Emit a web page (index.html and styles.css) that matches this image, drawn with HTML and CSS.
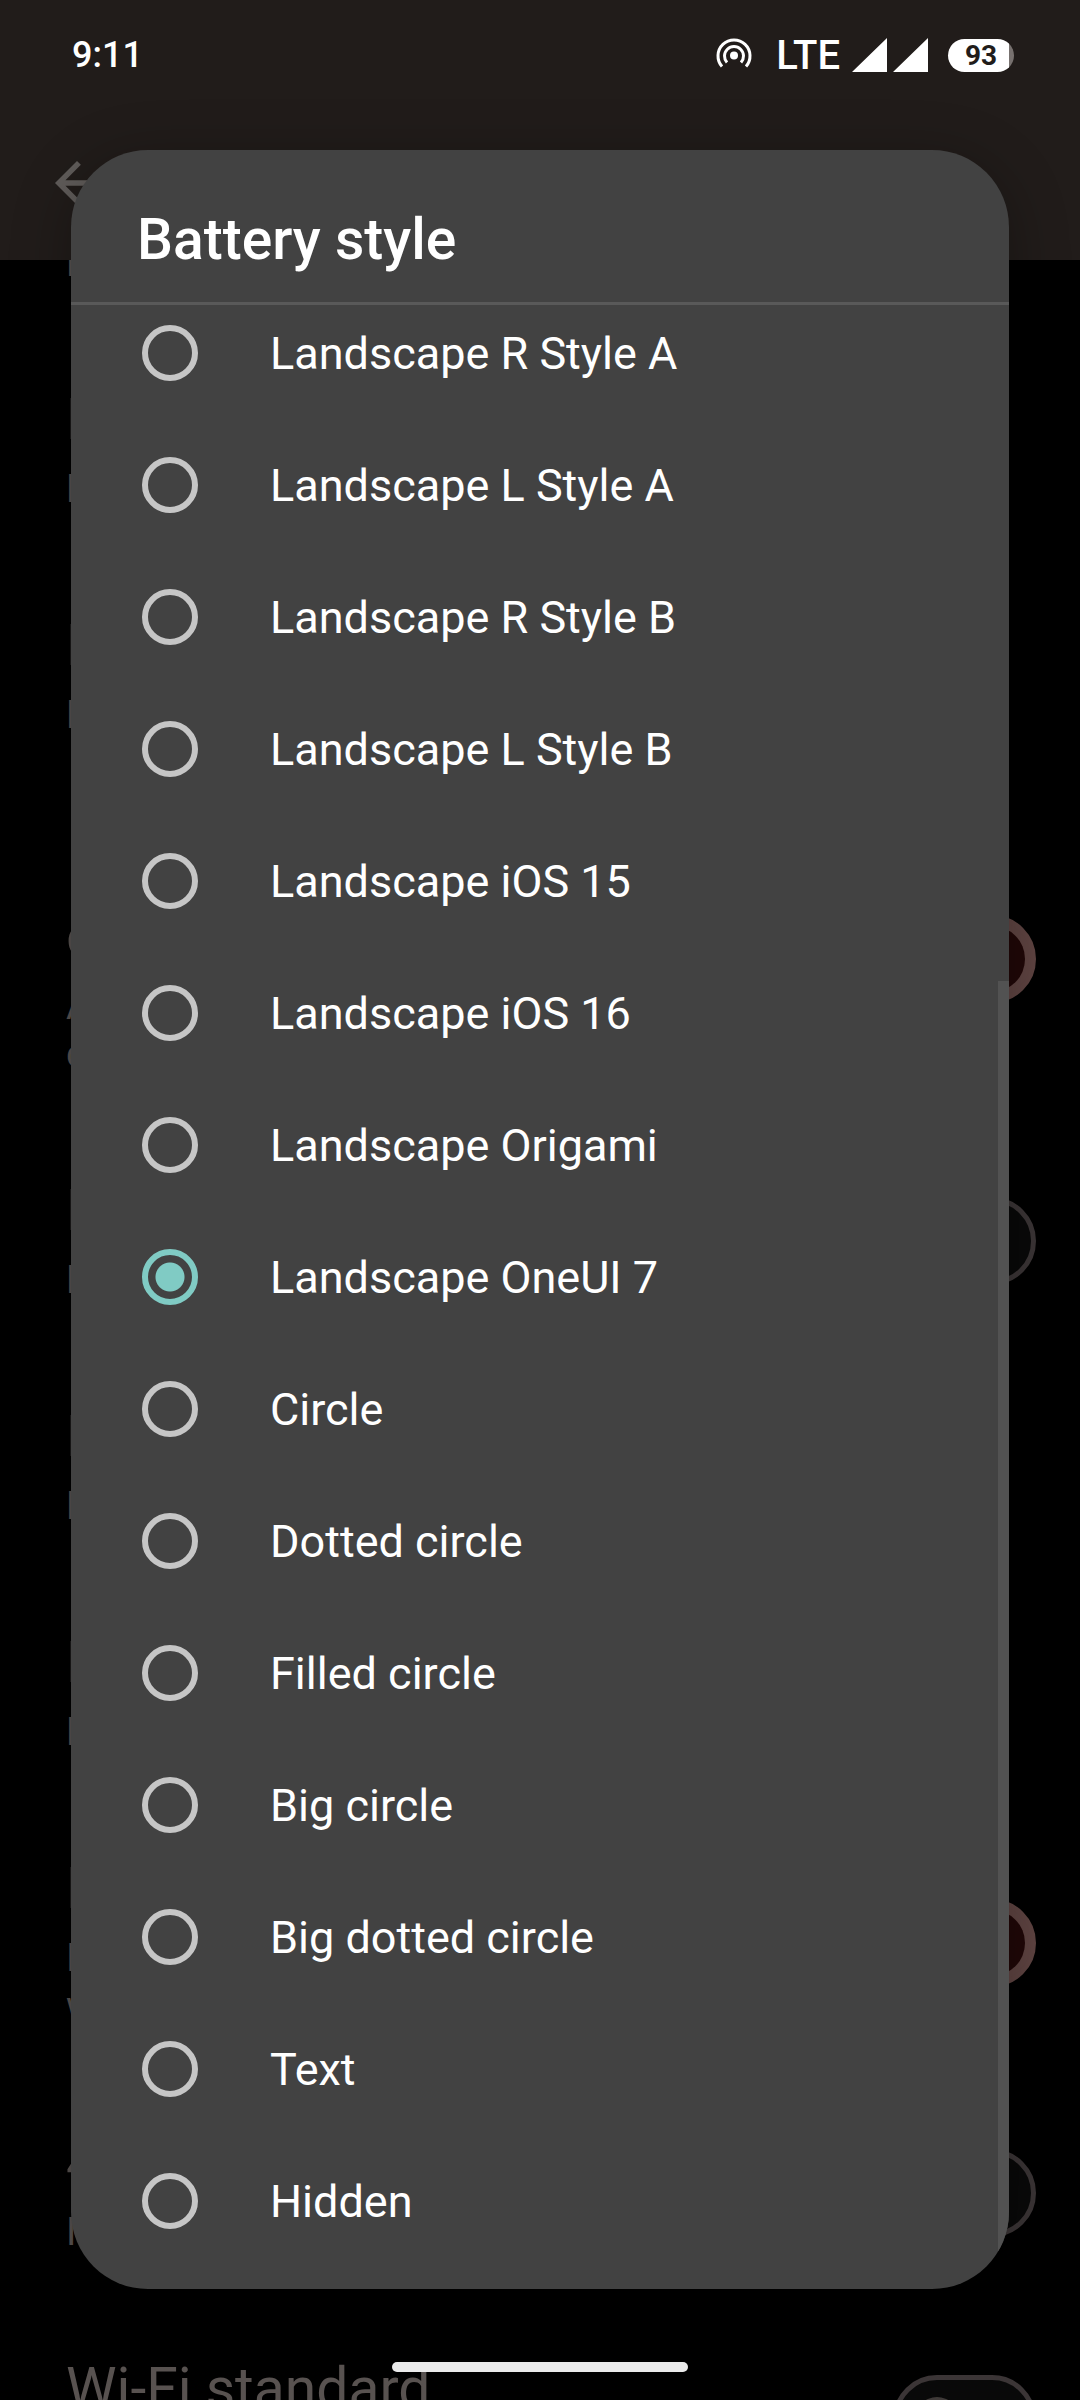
FILE: index.html
```html
<!DOCTYPE html>
<html lang="en">
<head>
<meta charset="utf-8">
<meta name="viewport" content="width=device-width">
<title>Battery style</title>
<link rel="stylesheet" href="styles.css">
</head>
<body>
<div class="screen">
  <div class="settings" aria-hidden="true">
    <div class="app-bar">
      <svg class="back" viewBox="0 0 24 24"><path d="M20 11H7.8l5.6-5.6L12 4l-8 8 8 8 1.4-1.4L7.8 13H20z"/></svg>
    </div>
    <div class="prefs">
      <div class="pref"><div><p class="pref-title">L</p><p class="pref-note">L</p></div></div>
      <div class="pref"><div><p class="pref-title">L</p><p class="pref-note">L</p></div></div>
      <div class="pref"><div><p class="pref-title">L</p><p class="pref-note">L</p></div></div>
      <div class="pref"><div><p class="pref-title">I<br>c</p><p class="pref-note">A<br>c</p></div><span class="switch on"></span></div>
      <div class="pref"><div><p class="pref-title">L</p><p class="pref-note">L</p></div><span class="switch"></span></div>
      <div class="pref"><div><p class="pref-title">L</p><p class="pref-note">L</p></div></div>
      <div class="pref"><div><p class="pref-title">L</p><p class="pref-note">L</p></div></div>
      <div class="pref"><div><p class="pref-title">L</p><p class="pref-note">I<br>w</p></div><span class="switch on"></span></div>
      <div class="pref"><div><p class="pref-title">4</p><p class="pref-note">I</p></div><span class="switch"></span></div>
      <div class="pref"><div><p class="pref-title">Wi-Fi standard</p><p class="pref-note">&nbsp;</p></div><span class="switch"></span></div>
    </div>
  </div>

  <header class="status">
    <time class="clock">9:11</time>
    <div class="indicators">
      <svg class="hotspot" viewBox="0 0 36 36" fill="none" stroke="#fff" stroke-width="3">
        <path d="M6 29.500A16 16 0 1 1 30 29.500"/>
        <path d="M11 25.500A9.500 9.500 0 1 1 25 25.500"/>
        <circle cx="18" cy="18.500" r="4" fill="#fff" stroke="none"/>
      </svg>
      <span class="network">LTE</span>
      <svg class="signal" viewBox="0 0 76 34" fill="#fff"><path d="M0 34L35 0V34zM41 34L76 0V34z"/></svg>
      <span class="battery">93</span>
    </div>
  </header>

  <main class="overlay">
    <section class="dialog" role="dialog" aria-labelledby="dialog-title">
      <h1 class="dialog-title" id="dialog-title">Battery style</h1>
      <div class="scroller">
        <div class="options" role="radiogroup" aria-labelledby="dialog-title">
          <label class="option"><input type="radio" name="style">Landscape R Style A</label>
          <label class="option"><input type="radio" name="style">Landscape L Style A</label>
          <label class="option"><input type="radio" name="style">Landscape R Style B</label>
          <label class="option"><input type="radio" name="style">Landscape L Style B</label>
          <label class="option"><input type="radio" name="style">Landscape iOS 15</label>
          <label class="option"><input type="radio" name="style">Landscape iOS 16</label>
          <label class="option"><input type="radio" name="style">Landscape Origami</label>
          <label class="option"><input type="radio" name="style" checked>Landscape OneUI 7</label>
          <label class="option"><input type="radio" name="style">Circle</label>
          <label class="option"><input type="radio" name="style">Dotted circle</label>
          <label class="option"><input type="radio" name="style">Filled circle</label>
          <label class="option"><input type="radio" name="style">Big circle</label>
          <label class="option"><input type="radio" name="style">Big dotted circle</label>
          <label class="option"><input type="radio" name="style">Text</label>
          <label class="option"><input type="radio" name="style">Hidden</label>
        </div>
        <span class="scroll-thumb"></span>
      </div>
    </section>
  </main>
  <span class="home-pill"></span>
</div>
</body>
</html>
```
FILE: styles.css
```css
* { box-sizing: border-box; }

body {
  margin: 0;
  background: #000;
  color: #fff;
  font-family: Roboto, "Noto Sans", sans-serif;
}

h1, p { margin: 0; }

.screen {
  position: relative;
  min-height: 100vh;
  overflow: hidden;
}

/* Settings page, dimmed behind the dialog */
.settings {
  position: absolute;
  inset: 0;
  overflow: hidden;
  isolation: isolate;
}

.app-bar {
  position: relative;
  z-index: 1;
  height: 260px;
  padding: 150px 44px 0;
  background: #211c1a;
}

.back {
  display: block;
  width: 66px;
  height: 66px;
  fill: #605c5a;
}

.prefs { margin-top: -149px; }

.pref {
  display: flex;
  align-items: center;
  justify-content: space-between;
  padding: 50px 44px 50px 66px;
  color: #585250;
}

.pref-title {
  font-size: 57px;
  line-height: 65px;
}

.pref-note {
  margin-top: 13px;
  font-size: 38px;
  line-height: 48px;
}

.switch {
  display: flex;
  align-items: center;
  width: 143px;
  height: 88px;
  margin: -12px 0;
  padding: 0 17px;
  border: 5px solid #3b3536;
  border-radius: 44px;
  background: #090909;
}

.switch::before {
  content: "";
  width: 44px;
  height: 44px;
  border-radius: 50%;
  background: #3f3a38;
}

.switch.on {
  justify-content: flex-end;
  padding: 0 6px;
  border-color: #5f4442;
  background: #5f4442;
}

.switch.on::before {
  width: 66px;
  height: 66px;
  background: #200707;
}

/* Status bar */
.status {
  position: absolute;
  inset: 0 0 auto;
  z-index: 1;
  display: flex;
  align-items: center;
  justify-content: space-between;
  height: 110px;
  padding: 0 66px 0 72px;
  font-size: 38px;
  font-weight: 500;
}

.clock { font-size: 36px; }

.indicators {
  display: flex;
  align-items: center;
}

.hotspot {
  width: 36px;
  height: 36px;
  margin-right: 24px;
}

.network {
  margin-right: 12px;
  font-size: 40px;
}

.signal {
  width: 76px;
  height: 34px;
  margin-right: 20px;
}

.battery {
  width: 66px;
  height: 33px;
  border-radius: 17px;
  background: linear-gradient(to right, #fff 61px, #77716f 61px);
  color: #211c1a;
  font-size: 28px;
  font-weight: 700;
  line-height: 33px;
  text-align: center;
}

/* Dialog */
.overlay {
  position: relative;
  padding: 150px 71px 110px;
}

.dialog {
  overflow: hidden;
  border-radius: 77px;
  background: #424242;
  box-shadow: 0 12px 60px rgba(0, 0, 0, 0.3);
}

.dialog-title {
  padding: 57px 66px 30px;
  border-bottom: 3px solid #595959;
  font-size: 57px;
  font-weight: 500;
  line-height: 65px;
}

.scroller {
  position: relative;
  overflow: hidden;
  padding-bottom: 22px;
}

.options { margin-top: -18px; }

.option {
  display: flex;
  align-items: center;
  gap: 72px;
  height: 132px;
  padding: 0 71px;
  font-size: 45px;
}

.option input {
  appearance: none;
  width: 56px;
  height: 56px;
  margin: 0;
  border: 6px solid #c6c6c6;
  border-radius: 50%;
}

.option input:checked {
  border-color: #80cbc4;
  background: radial-gradient(circle, #80cbc4 14px, transparent 15px);
}

.scroll-thumb {
  position: absolute;
  top: 676px;
  right: 0;
  bottom: 0;
  width: 11px;
  background: #525252;
}

.home-pill {
  position: absolute;
  bottom: 28px;
  left: 50%;
  width: 296px;
  height: 10px;
  margin-left: -148px;
  border-radius: 5px;
  background: #ebebeb;
}
```
